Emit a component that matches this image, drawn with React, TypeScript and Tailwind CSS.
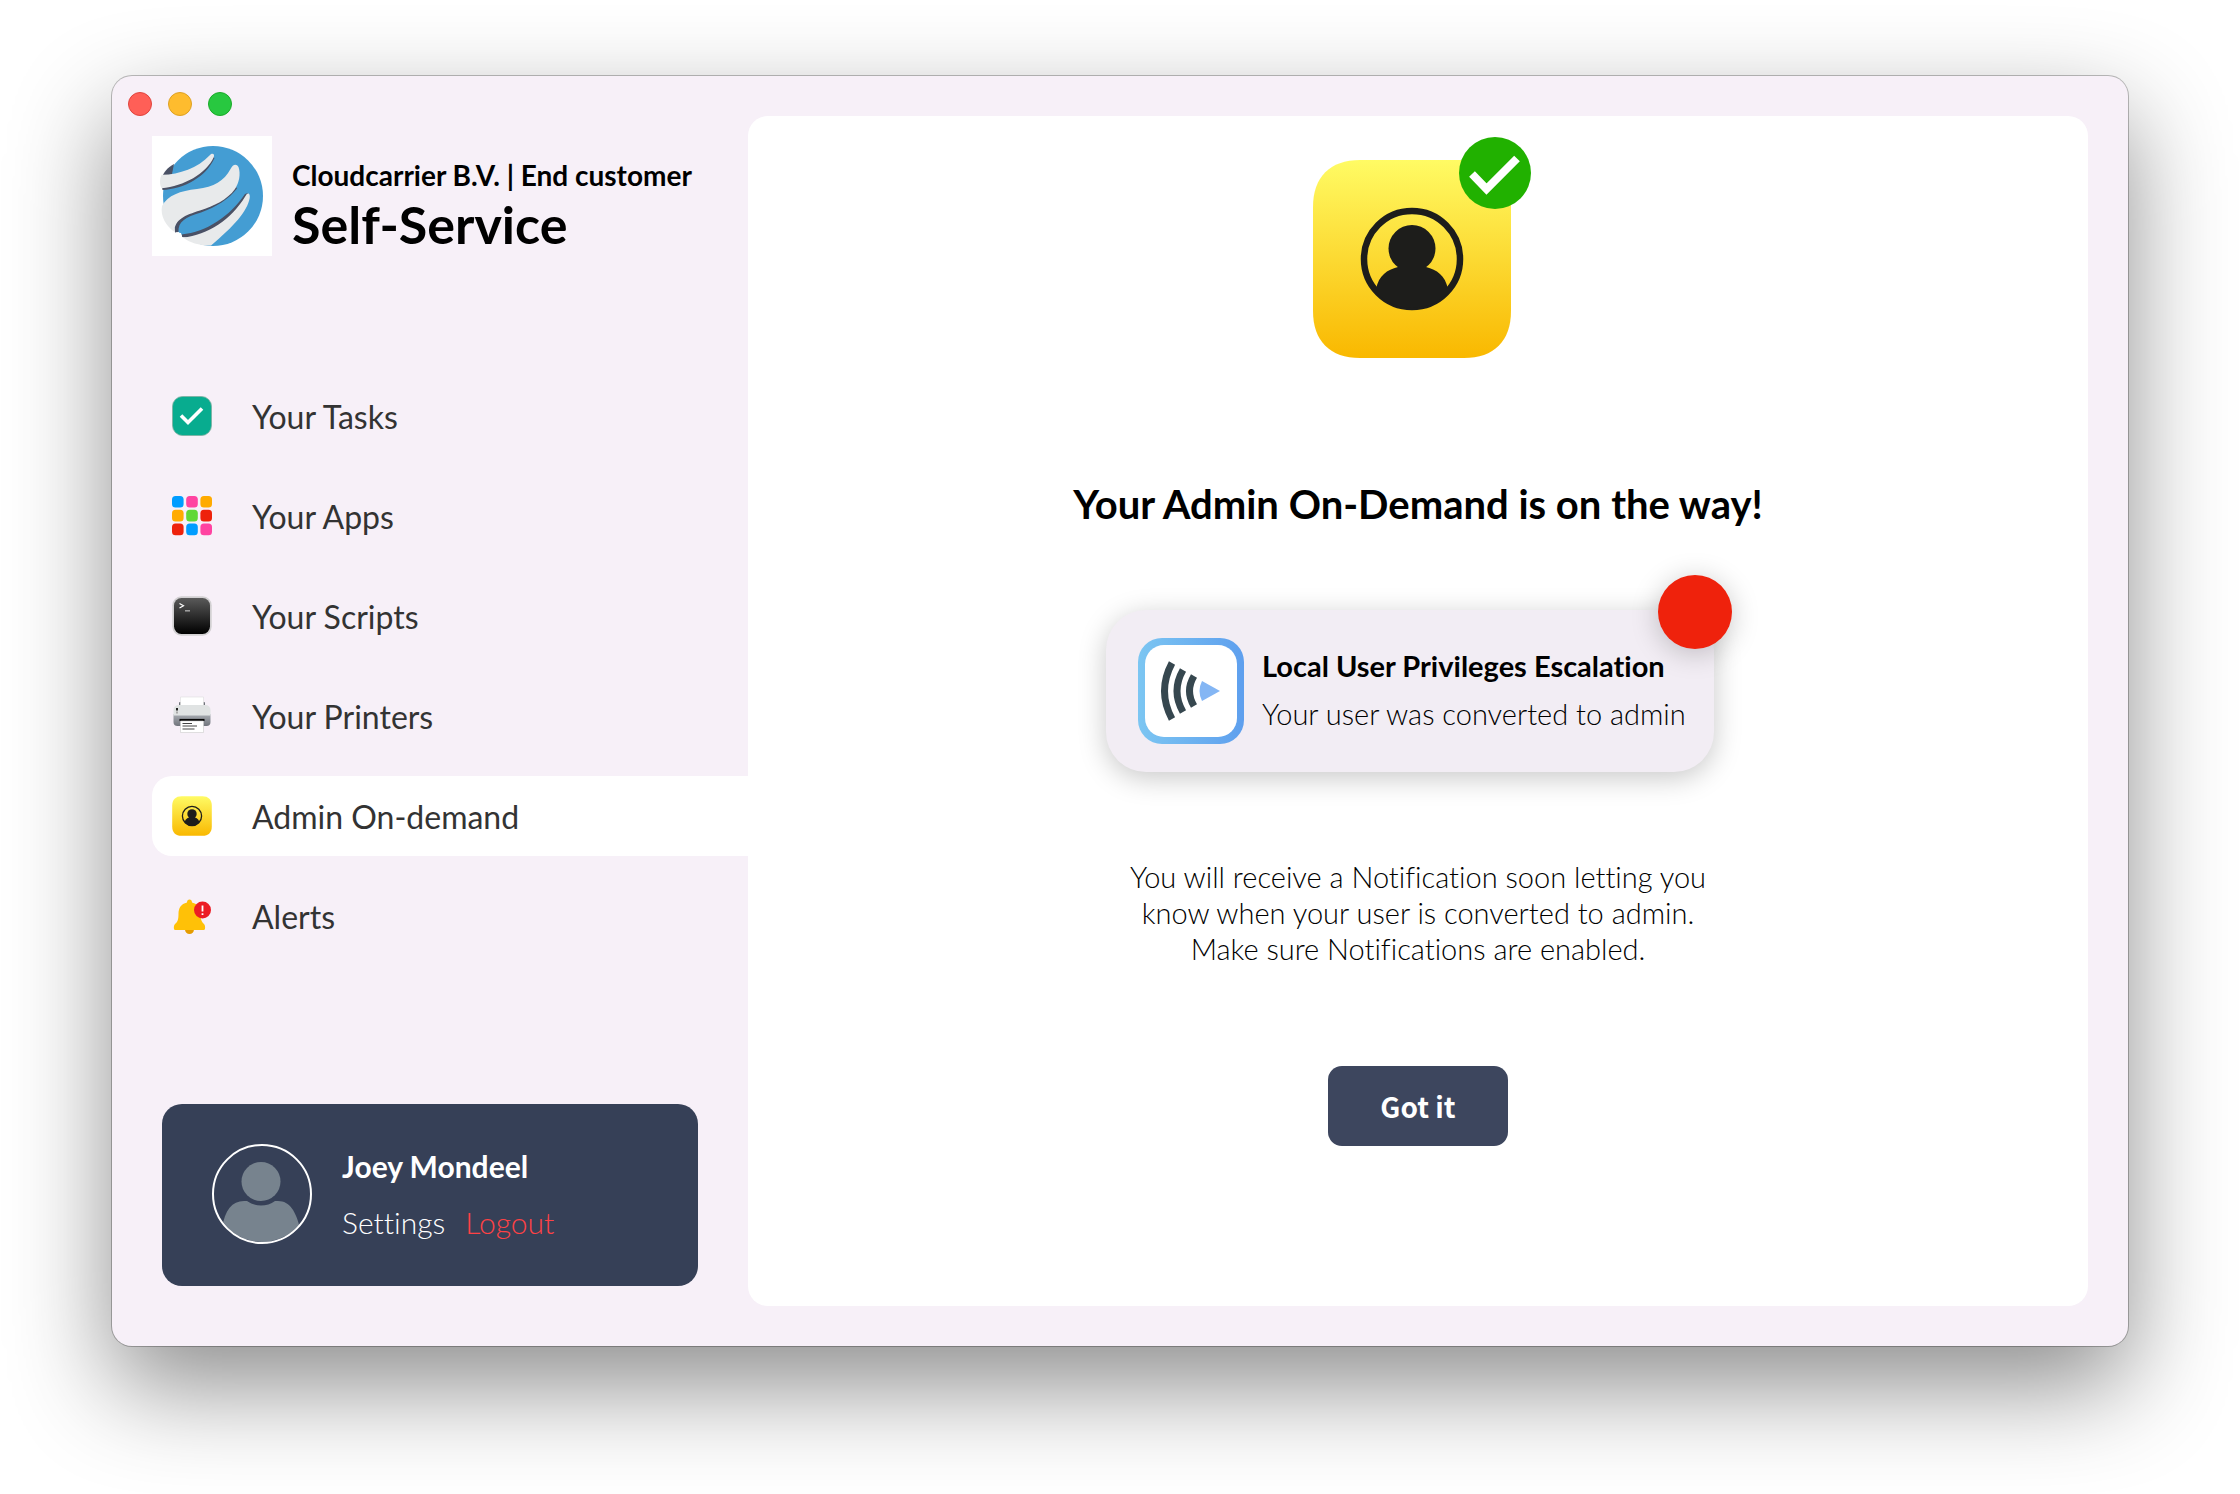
import type { ReactNode } from 'react';

interface NavItem {
  label: string;
  icon: ReactNode;
  active?: boolean;
}

function CarrierLogo() {
  return (
    <svg viewBox="0 0 120 120" className="size-[120px] shrink-0 bg-white" aria-hidden="true">
      <circle cx="61" cy="60" r="50" fill="#449dd3" />
      <path d="M22 28C15 32 12 36 10 41L20 38Z" fill="#4a5165" />
      <path d="M10 51.500C28 50 51 40 61 21L62.500 22C54 41 32 53 10.500 54Z" fill="#4a5165" />
      <path d="M9.700 38.700C26 39 46 32 57.500 19.500C60 16.500 63 18 61.800 21C54 38 32 50 9.700 52.300C7.500 49 7.500 42 9.700 38.700Z" fill="#e8eaeb" />
      <path d="M23 96.500C21 86 28 79 45 73.500C62 69 76 60 84 51L85 52.500C77 63 64 71 49 76.500C33 81 26 86 26.500 96Z" fill="#4a5165" />
      <path d="M10 70C16 59 28 55 45 53C62 51 72 45 78.500 33C81 28 84.500 27.500 86.500 31C89 38 87 47 83 53C75 64 62 70 48 74.500C33 79 22 84 22.500 96C14 90 8 80 10 70Z" fill="#e8eaeb" />
      <path d="M29.500 98.500C55 96 78 80 93 58L96 57C82 85 58 101 30.500 102Z" fill="#4a5165" />
      <path d="M24 96.500L29 97L30 101L50 104L48 110C38 108 30 104 24 98Z" fill="#fff" />
      <path d="M31 101.500C56 99 79 84 93.500 60C95.500 56 98.500 57 97.700 62C95 76 82 90 59 109.500C49 110 38 107 31 101.500Z" fill="#e8eaeb" />
    </svg>
  );
}

function TasksIcon() {
  return (
    <svg viewBox="0 0 40 40" className="size-10" aria-hidden="true">
      <rect x="0.5" y="0.5" width="39" height="39" rx="10" fill="#08ac8f" stroke="#7fae9f" strokeWidth="0.8" />
      <path d="M9 19.5l7 7L30 12.500" fill="none" stroke="#fff" strokeWidth="3.600" />
    </svg>
  );
}

const appColors = ['#009dff', '#ff43a1', '#ffab00', '#ffab00', '#61d836', '#ee220c', '#ee220c', '#009dff', '#ff43a1'];

function AppsIcon() {
  return (
    <svg viewBox="0 0 40 40" className="size-10" aria-hidden="true">
      {appColors.map((color, i) => (
        <rect key={i} x={(i % 3) * 14.2} y={Math.floor(i / 3) * 13.8} width="11.600" height="11.600" rx="3.500" fill={color} />
      ))}
    </svg>
  );
}

function ScriptsIcon() {
  return (
    <svg viewBox="0 0 40 40" className="size-10" aria-hidden="true">
      <defs>
        <linearGradient id="terminal" x1="0" y1="0" x2="0" y2="1">
          <stop offset="0" stopColor="#5a5a5a" />
          <stop offset="1" stopColor="#000" />
        </linearGradient>
      </defs>
      <rect x="0.300" y="0.300" width="39.400" height="39.400" rx="9" fill="#d2d0d2" />
      <rect x="2" y="2" width="36" height="36" rx="7.500" fill="url(#terminal)" />
      <path d="M7.500 7.500l4 2.300l-4 2.300" fill="none" stroke="#fff" strokeWidth="1.200" />
      <path d="M13 14.800h5" stroke="#aaa" strokeWidth="1.400" />
    </svg>
  );
}

function PrintersIcon() {
  return (
    <svg viewBox="0 0 40 40" className="size-10" aria-hidden="true">
      <defs>
        <linearGradient id="printer" x1="0" y1="0" x2="0" y2="1">
          <stop offset="0" stopColor="#a9adb3" />
          <stop offset="1" stopColor="#71757d" />
        </linearGradient>
      </defs>
      <rect x="7" y="6" width="26" height="6" rx="1" fill="#6e7279" />
      <path d="M8.500 1h23v9h-23z" fill="#fff" stroke="#ddd" strokeWidth="0.600" />
      <path d="M1.500 18h37v8a4 4 0 0 1-4 4h-29a4 4 0 0 1-4-4z" fill="url(#printer)" />
      <path d="M1.500 14a5 5 0 0 1 5-5h27a5 5 0 0 1 5 5v5.500h-37z" fill="#e0e3e3" />
      <path d="M5 12v2.500" stroke="#222" strokeWidth="2" />
      <path d="M5 15.500v2" stroke="#aaa" strokeWidth="2" />
      <path d="M7.500 24h25" stroke="#050505" strokeWidth="2.200" />
      <path d="M8.500 25h23v11.500h-23z" fill="#fff" stroke="#ccc" strokeWidth="0.600" />
      <path d="M10.500 27.500h9.500M10.500 30h14.500M10.500 33h12" stroke="#444" strokeWidth="1" />
    </svg>
  );
}

function AdminIcon({ className, id }: { className: string; id: string }) {
  return (
    <svg viewBox="0 0 200 200" className={className} aria-hidden="true">
      <defs>
        <linearGradient id={id} x1="0" y1="0" x2="0" y2="1">
          <stop offset="0" stopColor="#fffb64" />
          <stop offset="1" stopColor="#f9b800" />
        </linearGradient>
        <clipPath id={`${id}-clip`}>
          <circle cx="100" cy="100" r="49" />
        </clipPath>
      </defs>
      <path d="M48 1H152C182 1 199 18 199 48V152C199 182 182 199 152 199H48C18 199 1 182 1 152V48C1 18 18 1 48 1Z" fill={`url(#${id})`} />
      <circle cx="100" cy="100" r="48" fill="none" stroke="#1d1d1b" strokeWidth="6.500" />
      <circle cx="100" cy="89.500" r="23.500" fill="#1d1d1b" />
      <path clipPath={`url(#${id}-clip)`} d="M64 130C67 116 75 111 86 108V100H114V108C125 111 133 116 136 130V152H64Z" fill="#1d1d1b" />
    </svg>
  );
}

function AlertsIcon() {
  return (
    <svg viewBox="0 0 40 40" className="size-10" aria-hidden="true">
      <circle cx="17.500" cy="33.500" r="4.500" fill="#e59c00" />
      <path d="M17.500 3.500C19 3.500 20 4.500 20 6.500C26 8 28.500 12 28.500 18C28.500 24 30 26 32 28C33.500 29.500 33.500 34 32 34H3C1.500 34 1.500 29.500 3 28C5.500 26 6.500 24 6.500 18C6.500 12 9 8 15 6.500C15 4.500 16 3.500 17.500 3.500Z" fill="#ffc107" />
      <circle cx="30.500" cy="14" r="8.500" fill="#ec1c24" />
      <path d="M30.500 9.500v6M30.500 17.200v1.800" stroke="#fff" strokeWidth="1.800" />
    </svg>
  );
}

function Avatar() {
  return (
    <svg viewBox="0 0 100 100" className="size-[100px] shrink-0" aria-hidden="true">
      <defs>
        <clipPath id="avatar-clip">
          <circle cx="50" cy="50" r="48" />
        </clipPath>
      </defs>
      <g clipPath="url(#avatar-clip)" fill="#77838e">
        <circle cx="49" cy="37.500" r="19.500" />
        <path d="M10 84C13 66 20 57 32 57H35C43 63 55 63 63 57H66C78 57 84 68 88 84V100H10Z" />
      </g>
      <circle cx="50" cy="50" r="49" fill="none" stroke="#fff" strokeWidth="2" />
    </svg>
  );
}

function NotifierIcon() {
  return (
    <svg viewBox="0 0 106 106" className="size-[106px] shrink-0" aria-hidden="true">
      <defs>
        <linearGradient id="notifier" x1="0" y1="0" x2="1" y2="0">
          <stop offset="0" stopColor="#7cc6f2" />
          <stop offset="1" stopColor="#5e9fee" />
        </linearGradient>
      </defs>
      <rect width="106" height="106" rx="24" fill="url(#notifier)" />
      <rect x="7" y="7" width="92" height="92" rx="19" fill="#fff" />
      <g fill="none" stroke="#36474f" strokeWidth="7">
        <path d="M34 25Q19 53 34 81" />
        <path d="M45 32Q33 53 45 74" />
        <path d="M56 38Q47 53 56 68" />
      </g>
      <path d="M64 43L82 53L64 63Q59 53 64 43Z" fill="#84b6f4" />
    </svg>
  );
}

const navItems: NavItem[] = [
  { label: 'Your Tasks', icon: <TasksIcon /> },
  { label: 'Your Apps', icon: <AppsIcon /> },
  { label: 'Your Scripts', icon: <ScriptsIcon /> },
  { label: 'Your Printers', icon: <PrintersIcon /> },
  { label: 'Admin On-demand', icon: <AdminIcon className="size-10" id="admin-small" />, active: true },
  { label: 'Alerts', icon: <AlertsIcon /> },
];

function Sidebar() {
  return (
    <aside className="flex w-[636px] shrink-0 flex-col pt-4 pb-[60px] pl-4">
      <div className="flex gap-4">
        <button aria-label="Close" className="size-6 rounded-full border border-[#e0443e] bg-[#ff5f57]" />
        <button aria-label="Minimize" className="size-6 rounded-full border border-[#dea123] bg-[#febc2e]" />
        <button aria-label="Zoom" className="size-6 rounded-full border border-[#1aab29] bg-[#28c840]" />
      </div>

      <header className="mt-5 flex gap-5 pl-6">
        <CarrierLogo />
        <div className="flex flex-col pt-[21px]">
          <p className="text-[28px] leading-9 font-bold">Cloudcarrier B.V. | End customer</p>
          <h1 className="text-[52px] leading-[62px] font-bold">Self-Service</h1>
        </div>
      </header>

      <nav className="mt-[120px] ml-6 flex flex-col gap-5">
        {navItems.map((item) => (
          <a
            key={item.label}
            href="#"
            aria-current={item.active ? 'page' : undefined}
            className={`flex h-20 items-center gap-10 rounded-l-[20px] pl-5 text-[32px] text-[#333] ${item.active ? 'bg-white' : ''}`}
          >
            {item.icon}
            <span className="pt-0.5">{item.label}</span>
          </a>
        ))}
      </nav>

      <section className="mt-auto mr-[50px] ml-[34px] flex h-[182px] items-center gap-[30px] rounded-[20px] bg-[#364057] pb-0.5 pl-[50px] text-white">
        <Avatar />
        <div className="flex flex-col gap-4 text-[30px] leading-10">
          <p className="font-bold">Joey Mondeel</p>
          <div className="flex gap-5 font-light">
            <a href="#">Settings</a>
            <a href="#" className="text-[#ff4245]">Logout</a>
          </div>
        </div>
      </section>
    </aside>
  );
}

function Notification() {
  return (
    <div className="relative flex h-[162px] w-[608px] items-center gap-[18px] rounded-[40px] bg-[#f2edf4] pl-8 shadow-[0_6px_28px_rgba(0,0,0,0.22)]">
      <NotifierIcon />
      <div className="flex flex-col gap-2 pb-0.5 text-[29px] leading-10 whitespace-nowrap">
        <p className="font-bold">Local User Privileges Escalation</p>
        <p className="font-light">Your user was converted to admin</p>
      </div>
      <span className="absolute -top-[35px] -right-[18px] size-[74px] rounded-full bg-[#ef220c] shadow-[0_4px_28px_rgba(0,0,0,0.22)]" />
    </div>
  );
}

export default function App() {
  return (
    <div className="min-h-screen bg-white px-28 pt-[76px] pb-[148px] font-['Lato',sans-serif] text-black [font-variant-ligatures:none]">
      <div className="flex min-h-[1270px] rounded-[20px] bg-[#f7f0f8] pr-10 shadow-[0_0_0_1px_rgba(0,0,0,0.25),0_40px_100px_rgba(0,0,0,0.45)]">
        <Sidebar />

        <main className="my-10 flex flex-1 flex-col items-center rounded-[20px] bg-white pt-[43px]">
          <div className="relative mr-3">
            <AdminIcon className="size-[200px]" id="admin-large" />
            <svg viewBox="0 0 72 72" className="absolute -top-[22px] -right-[19px] size-[72px]" aria-hidden="true">
              <circle cx="36" cy="36" r="36" fill="#21b100" />
              <path d="M13 37l14.500 15L58 21.500" fill="none" stroke="#fff" strokeWidth="8" />
            </svg>
          </div>
          <h2 className="mt-[121px] text-[40px] leading-[48px] font-bold">Your Admin On-Demand is on the way!</h2>
          <div className="mt-[82px] mr-4">
            <Notification />
          </div>
          <p className="mt-[87px] text-center text-[29px] leading-9 font-light">
            You will receive a Notification soon letting you
            <br />
            know when your user is converted to admin.
            <br />
            Make sure Notifications are enabled.
          </p>
          <button className="mt-[99px] h-20 w-[180px] rounded-[14px] bg-[#3d465e] font-['Noto_Sans_CJK_SC',sans-serif] text-[28px] font-bold text-white">
            Got it
          </button>
        </main>
      </div>
    </div>
  );
}
